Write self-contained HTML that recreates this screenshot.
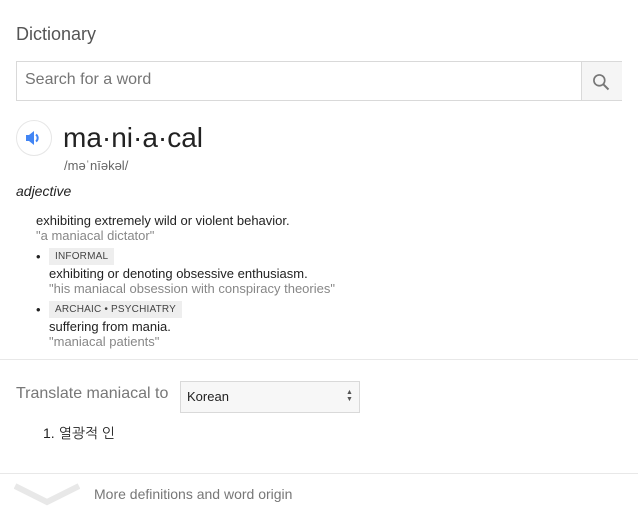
<!DOCTYPE html>
<html><head><meta charset="utf-8"><style>
body{margin:0;width:638px;height:514px;background:#fff;font-family:"Liberation Sans",Arial,sans-serif;position:relative;overflow:hidden;color:#222}
.a{position:absolute;white-space:nowrap}
.tag{background:#eee;font-size:10px;color:#444;padding:3px 6px;letter-spacing:0.2px}
.g{color:#878787}
</style></head><body>
<div class="a" style="left:16px;top:24px;font-size:18px;color:#555">Dictionary</div>
<div class="a" style="left:16px;top:61px;width:604px;height:38px;border:1px solid #d9d9d9"></div>
<div class="a" style="left:25px;top:71px;font-size:16px;color:#757575">Search for a word</div>
<div class="a" style="left:581px;top:62px;width:40px;height:38px;background:#f5f5f5;border-left:1px solid #d9d9d9"></div>
<svg class="a" style="left:591px;top:72px" width="20" height="20" viewBox="0 0 24 24"><circle cx="10" cy="10" r="6.5" fill="none" stroke="#777" stroke-width="2"/><path d="M14.8 14.8L21 21" stroke="#777" stroke-width="2.4"/></svg>
<div class="a" style="left:16px;top:120px;width:34px;height:34px;border-radius:50%;border:1px solid #e6e6e6;background:#fff"></div>
<svg class="a" style="left:24px;top:129px" width="18" height="18" viewBox="0 0 18 18"><path d="M2 6h3l5-4v14l-5-4H2z" fill="#4285f4"/><path d="M12 5.5a4.5 4.5 0 0 1 0 7" stroke="#4285f4" stroke-width="2" fill="none"/></svg>
<div class="a" style="left:63px;top:122px;font-size:28px;color:#222">ma·ni·a·cal</div>
<div class="a" style="left:64px;top:158px;font-size:13px;color:#666">/məˈnīəkəl/</div>
<div class="a" style="left:16px;top:183px;font-size:14px;font-style:italic">adjective</div>
<div class="a" style="left:36px;top:213px;font-size:13px">exhibiting extremely wild or violent behavior.</div>
<div class="a g" style="left:36px;top:228px;font-size:13px">"a maniacal dictator"</div>
<div class="a" style="left:36px;top:249px;font-size:13px">•</div>
<div class="a tag" style="left:49px;top:248px">INFORMAL</div>
<div class="a" style="left:49px;top:266px;font-size:13px">exhibiting or denoting obsessive enthusiasm.</div>
<div class="a g" style="left:49px;top:281px;font-size:13px">"his maniacal obsession with conspiracy theories"</div>
<div class="a" style="left:36px;top:302px;font-size:13px">•</div>
<div class="a tag" style="left:49px;top:301px">ARCHAIC • PSYCHIATRY</div>
<div class="a" style="left:49px;top:319px;font-size:13px">suffering from mania.</div>
<div class="a g" style="left:49px;top:334px;font-size:13px">"maniacal patients"</div>
<div class="a" style="left:0;top:359px;width:638px;height:1px;background:#e8e8e8"></div>
<div class="a" style="left:16px;top:385px;font-size:16px;color:#777">Translate maniacal to</div>
<div class="a" style="left:180px;top:381px;width:178px;height:30px;border:1px solid #d9d9d9;background:#f7f7f7"></div>
<div class="a" style="left:187px;top:389px;font-size:13px;color:#222">Korean</div>
<div class="a" style="left:346px;top:389px;font-size:7px;color:#555;line-height:7px">▲<br>▼</div>
<div class="a" style="left:43px;top:425px;font-size:14px;font-family:'Liberation Sans','NanumGothic',sans-serif">1. 열광적 인</div>
<div class="a" style="left:0;top:473px;width:638px;height:1px;background:#e8e8e8"></div>
<svg class="a" style="left:14px;top:482px" width="66" height="24" viewBox="0 0 66 24"><path d="M1 4L33 20L65 4" stroke="#e8e8e8" stroke-width="6" fill="none"/></svg>
<div class="a" style="left:94px;top:486px;font-size:14px;color:#777">More definitions and word origin</div>
</body></html>
